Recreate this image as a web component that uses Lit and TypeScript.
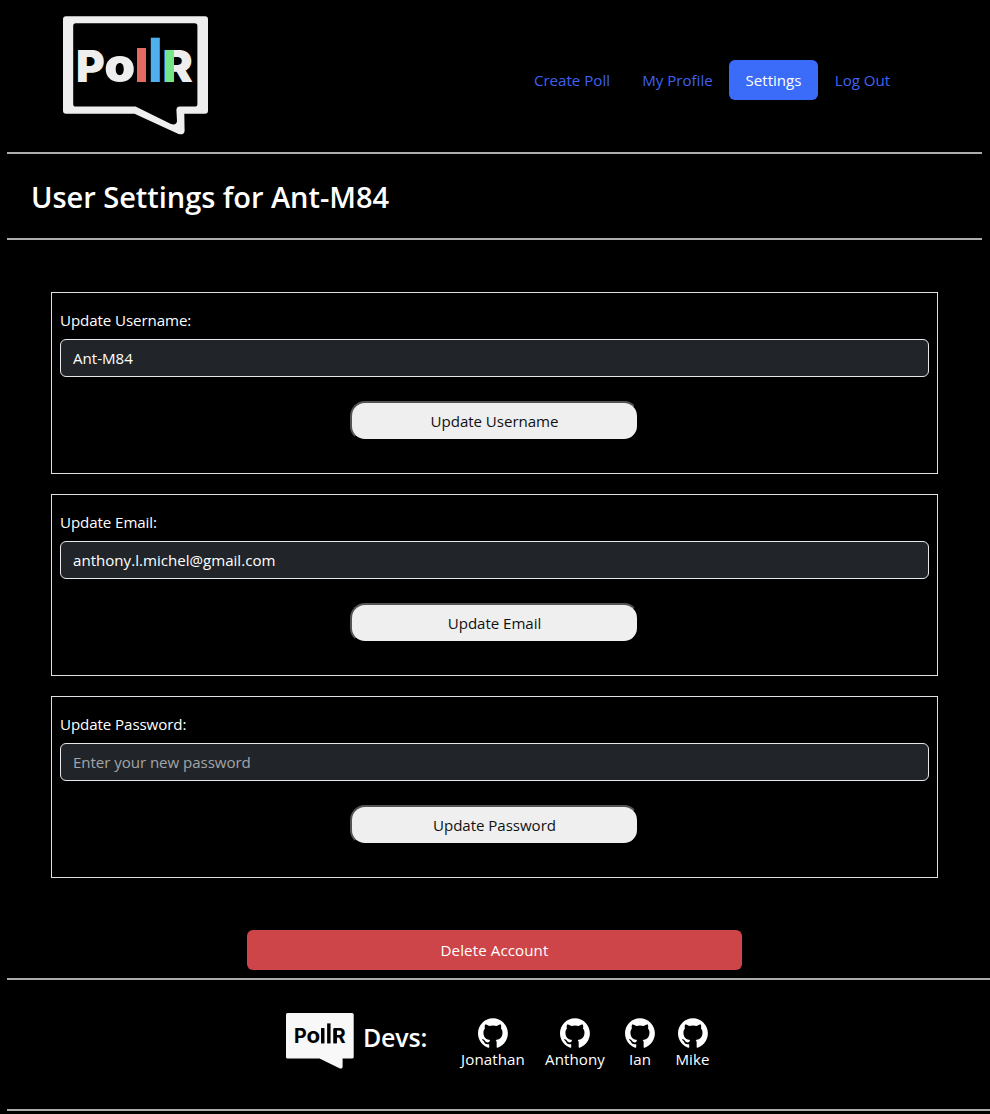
import { LitElement, html, svg, css } from "lit";
import { customElement, state } from "lit/decorators.js";

interface Section {
  label: string;
  type: string;
  value: string;
  placeholder: string;
  action: string;
}

/* Letters and poll bars; the two bars stand in for the "ll". */
const wordmark = (ink: string, red: string, blue: string, green: string, weight: number, bar: number) => svg`
  <g fill=${ink} font-family="Inter, sans-serif" font-weight=${weight}>
    <text x="13" y="66" font-size="44" textLength="28.8" lengthAdjust="spacingAndGlyphs">P</text>
    <text x="41.2" y="65.8" font-size="47" textLength="31" lengthAdjust="spacingAndGlyphs">o</text>
    <text x="99.4" y="66" font-size="44" textLength="30.4" lengthAdjust="spacingAndGlyphs">R</text>
  </g>
  <rect x="74" y="32" width=${bar} height="34" fill=${red} />
  <rect x="87.8" y="21.7" width=${bar} height="44.3" fill=${blue} />
  <rect x="102" y="34" width=${bar} height="32" fill=${green} />`;

@customElement("pollr-logo")
class PollrLogo extends LitElement {
  static styles = css`
    :host { display: block; width: 146px; height: 120px; }
    svg { display: block; }
  `;
  render() {
    return html`<svg width="146" height="120" viewBox="0 0 146 120" role="img" aria-label="PollR">
      <path fill="#eeeeee" fill-rule="evenodd"
        d="M3 0.3H142Q145 0.3 145 3.3V94.5Q145 97.8 142 97.8H121.3L121.6 115Q121 119.4 115.5 118L71.5 97.8H3Q0 97.8 0 94.5V3.3Q0 0.3 3 0.3Z
           M12.8 7.3Q10.2 7.3 10.2 9.8V88.2Q10.2 90.6 12.8 90.6H72.5L108 108Q113.6 109.6 114 105L113.4 94Q113.6 90.6 116.8 90.6H131.8Q134.4 90.6 134.4 88.2V9.8Q134.4 7.3 131.8 7.3Z" />
      ${wordmark("#eeeeee", "#e36a63", "#50b0ef", "#75e686", 900, 9)}
    </svg>`;
  }
}

@customElement("pollr-badge")
class PollrBadge extends LitElement {
  static styles = css`
    :host { display: block; width: 68px; height: 57px; }
    svg { display: block; }
  `;
  render() {
    return html`<svg width="68" height="57" viewBox="0 0 68 57" role="img" aria-label="PollR">
      <path fill="#f8f8f8" d="M1.5 0H66Q67.7 0 67.7 1.5V44Q67.7 45.6 66 45.6H56.6V54Q56.3 56.2 54 55.4L33.5 45.6H1.5Q0 45.6 0 44V1.5Q0 0 1.5 0Z" />
      <g transform="translate(2.4 0.6) scale(0.441 0.452)">${wordmark("#000", "#000", "#000", "#000", 700, 7.8)}</g>
    </svg>`;
  }
}

@customElement("settings-card")
class SettingsCard extends LitElement {
  static properties = { section: { attribute: false } };
  declare section: Section;
  static styles = css`
    :host {
      display: flex; flex-direction: column; box-sizing: border-box; height: 182px;
      padding: 15px 8px 0; border: 1px solid #dee2e6; color: #fff;
    }
    label { line-height: 24px; margin-bottom: 7px; letter-spacing: -0.08px; }
    input {
      box-sizing: border-box; width: 100%; height: 38px; padding: 6px 12px; margin: 0;
      border: 1px solid #e6e8ea; border-radius: 6px; background: #212529; color: #fff;
      font: inherit; outline: none;
    }
    input::placeholder { color: #a3a5a8; opacity: 1; letter-spacing: -0.06px; }
    button {
      box-sizing: border-box; width: 33.3333%; height: 40px; margin: 24px auto 0; padding: 0;
      border: 2px outset #000; border-radius: 15px; background: #efefef; color: #111;
      font: inherit; letter-spacing: -0.05px;
    }
  `;
  render() {
    const s = this.section;
    return html`<label>${s.label}</label>
      <input type=${s.type} .value=${s.value} placeholder=${s.placeholder} />
      <button type="button">${s.action}</button>`;
  }
}

@customElement("app-root")
class AppRoot extends LitElement {
  @state() private active = "Settings";

  private links = ["Create Poll", "My Profile", "Settings", "Log Out"];
  private devs = ["Jonathan", "Anthony", "Ian", "Mike"];
  private sections: Section[] = [
    { label: "Update Username:", type: "text", value: "Ant-M84", placeholder: "", action: "Update Username" },
    { label: "Update Email:", type: "email", value: "anthony.l.michel@gmail.com", placeholder: "", action: "Update Email" },
    { label: "Update Password:", type: "password", value: "", placeholder: "Enter your new password", action: "Update Password" },
  ];

  static styles = css`
    :host {
      display: flex; flex-direction: column; box-sizing: border-box;
      width: 100%; height: 1114px; overflow: hidden; padding-left: 7px;
      background: #000; color: #fff;
      font: 400 15.1px/24px "Open Sans", "Noto Sans", sans-serif;
    }
    header {
      display: flex; align-items: flex-start; justify-content: space-between; box-sizing: border-box;
      height: 154px; margin-right: 8px; padding: 16px 75px 0 56px; border-bottom: 2px solid #acacac;
    }
    nav { display: grid; grid-template-columns: 108px 103px 89px 89px; margin-top: 44px; }
    .tab {
      height: 40px; line-height: 41px; text-align: center; border-radius: 6px;
      color: #3f62f2; text-decoration: none; white-space: nowrap;
    }
    .tab.active { background: #3b6cf9; color: #fff; }
    .title {
      box-sizing: border-box; height: 86px; margin-right: 8px; padding: 25px 24px 0;
      border-bottom: 2px solid #acacac;
    }
    h1 { margin: 0; font-size: 29px; line-height: 36px; font-weight: 600; letter-spacing: -0.03px; }
    main { display: flex; flex-direction: column; gap: 20px; padding: 52px 52px 0 44px; }
    .delete {
      width: 495px; height: 40px; margin: 32px auto 0; padding: 0; border: 0; border-radius: 6px;
      background: #cd4549; color: #fff; font: inherit; letter-spacing: 0.1px;
    }
    footer {
      display: flex; align-items: flex-start; box-sizing: border-box; height: 133px; margin-top: 8px;
      padding: 33px 0 0 279px; border-top: 2px solid #acacac; border-bottom: 2px solid #acacac;
    }
    h2 { margin: 8px 0 0 9px; width: 98px; font-size: 25px; line-height: 32px; font-weight: 600; letter-spacing: -0.2px; }
    .devs { display: grid; grid-template-columns: 64px 60px 30px 35px; column-gap: 20px; margin-top: 5px; }
    .dev { display: flex; flex-direction: column; align-items: center; white-space: nowrap; }
    .dev svg { display: block; width: 30px; height: 30px; }
    .dev span { line-height: 23px; letter-spacing: 0.1px; }
  `;

  render() {
    return html`
      <header>
        <pollr-logo></pollr-logo>
        <nav>
          ${this.links.map((l) => html`<a class="tab ${l === this.active ? "active" : ""}" @click=${() => (this.active = l)}>${l}</a>`)}
        </nav>
      </header>
      <div class="title"><h1>User Settings for Ant-M84</h1></div>
      <main>
        ${this.sections.map((s) => html`<settings-card .section=${s}></settings-card>`)}
        <button class="delete" type="button">Delete Account</button>
      </main>
      <footer>
        <pollr-badge></pollr-badge>
        <h2>Devs:</h2>
        <div class="devs">
          ${this.devs.map((d) => html`<div class="dev">
            <svg viewBox="0 0 98 96" fill="#fff"><path fill-rule="evenodd" clip-rule="evenodd" d="M48.854 0C21.839 0 0 22 0 49.217c0 21.756 13.993 40.172 33.405 46.69 2.427.49 3.316-1.059 3.316-2.362 0-1.141-.08-5.052-.08-9.127-13.59 2.934-16.42-5.867-16.42-5.867-2.184-5.704-5.42-7.17-5.42-7.17-4.448-3.015.324-3.015.324-3.015 4.934.326 7.523 5.052 7.523 5.052 4.367 7.496 11.404 5.378 14.235 4.074.404-3.178 1.699-5.378 3.074-6.6-10.839-1.141-22.243-5.378-22.243-24.283 0-5.378 1.94-9.778 5.014-13.2-.485-1.222-2.184-6.275.486-13.038 0 0 4.125-1.304 13.426 5.052a46.97 46.97 0 0 1 12.214-1.63c4.125 0 8.33.571 12.213 1.63 9.302-6.356 13.427-5.052 13.427-5.052 2.67 6.763.97 11.816.485 13.038 3.155 3.422 5.015 7.822 5.015 13.2 0 18.905-11.404 23.06-22.324 24.283 1.78 1.548 3.316 4.481 3.316 9.126 0 6.6-.08 11.897-.08 13.526 0 1.304.89 2.853 3.316 2.364 19.412-6.52 33.405-24.935 33.405-46.691C97.707 22 75.788 0 48.854 0z" /></svg>
            <span>${d}</span>
          </div>`)}
        </div>
      </footer>`;
  }
}
